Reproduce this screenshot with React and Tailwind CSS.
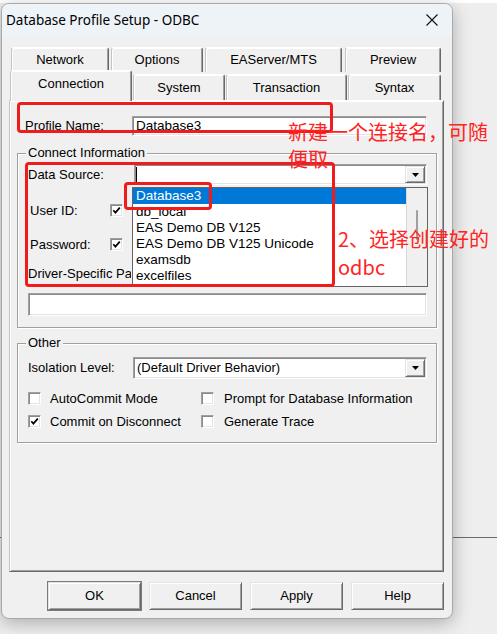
import React from 'react';

// classic 3D edges
const raised =
  'border border-t-[#e3e3e3] border-l-[#e3e3e3] border-r-[#696969] border-b-[#696969] shadow-[inset_1px_1px_0_#fff,inset_-1px_-1px_0_#a0a0a0]';
const sunken =
  'border border-t-[#a0a0a0] border-l-[#a0a0a0] border-r-white border-b-white shadow-[inset_1px_1px_0_#8a8a8a,inset_-1px_-1px_0_#e3e3e3]';
const etched = 'border border-[#a0a0a0] shadow-[inset_1px_1px_0_#fff,1px_1px_0_#fff]';

const backTabs = [
  { label: 'Network', cls: 'ml-[2px] w-[98px]' },
  { label: 'Options', cls: 'ml-[2px] w-[92px]' },
  { label: 'EAServer/MTS', cls: 'ml-[2px] w-[137px]' },
  { label: 'Preview', cls: 'ml-[3px] w-[96px]' },
];

const frontTabs = [
  { label: 'System', cls: 'ml-[1px] w-[92px]' },
  { label: 'Transaction', cls: 'ml-[1px] w-[121px]' },
  { label: 'Syntax', cls: 'ml-[1px] w-[93px]' },
];

const sources = ['Database3', 'db_local', 'EAS Demo DB V125', 'EAS Demo DB V125 Unicode', 'examsdb', 'excelfiles'];

const tabBase =
  'flex items-center justify-center rounded-t-[3px] bg-[#f0f0f0] border-t border-l border-r border-t-white border-l-[#c4c4c4] border-r-[#696969] shadow-[inset_1px_1px_0_#fff,inset_-1px_0_0_#a0a0a0]';

function DropArrow() {
  return (
    <div className={`absolute right-[1px] top-[1px] bottom-[1px] flex w-[20px] items-center justify-center bg-[#f0f0f0] ${raised}`}>
      <svg width="7" height="4" viewBox="0 0 7 4">
        <path d="M0 0h7L3.5 4z" fill="#000" />
      </svg>
    </div>
  );
}

function Check({ checked }) {
  return (
    <span className={`flex h-[13px] w-[13px] shrink-0 items-center justify-center bg-white ${sunken}`}>
      {checked && (
        <svg width="9" height="9" viewBox="0 0 9 9">
          <path d="M1.3 4.2 L3.4 6.6 L7.8 1.6" stroke="#000" strokeWidth="1.7" fill="none" />
        </svg>
      )}
    </span>
  );
}

function Button({ children, primary }) {
  return (
    <button
      className={`h-[28px] w-[93px] bg-[#f0f0f0] text-[13px] ${raised} ${primary ? 'outline outline-1 outline-[#7a7a7a]' : ''}`}
    >
      {children}
    </button>
  );
}

export default function App() {
  return (
    <div className="relative h-[634px] w-[497px] overflow-hidden bg-[#eeeeee] font-['Liberation_Sans',Arial,sans-serif] text-[13px] text-black">
      {/* desktop behind the window */}
      <div className="absolute left-0 top-0 h-[3px] w-full bg-white" />
      <div className="absolute left-0 top-[537px] h-px w-full bg-[#6b6b6b]" />

      <div className="absolute left-[1px] top-[3px] flex h-[616px] w-[452px] flex-col overflow-hidden rounded-[8px] border border-[#a9a9a9] bg-[#f0f0f0] shadow-[0_4px_18px_rgba(0,0,0,0.28)]">
        {/* title bar */}
        <div className="flex h-[32px] items-center justify-between bg-[#eef3f8] pl-[4px] pr-[14px]">
          <span className="font-['Noto_Sans',sans-serif] text-[13.5px]">Database Profile Setup - ODBC</span>
          <svg width="12" height="12" viewBox="0 0 12 12">
            <path d="M0.5 0.5L11.5 11.5M11.5 0.5L0.5 11.5" stroke="#111" strokeWidth="1.1" />
          </svg>
        </div>

        <div className="flex flex-col pl-[7px]">
          {/* tabs, back row */}
          <div className="mt-[11px] flex h-[25px]">
            {backTabs.map((t) => (
              <div key={t.label} className={`${tabBase} ${t.cls} h-[25px]`}>
                {t.label}
              </div>
            ))}
          </div>
          {/* tabs, front row */}
          <div className="flex h-[28px] items-end">
            <div className={`${tabBase} relative z-10 -mb-px ml-[1px] h-[31px] w-[122px] pb-[4px]`}>Connection</div>
            {frontTabs.map((t) => (
              <div key={t.label} className={`${tabBase} ${t.cls} h-[26px]`}>
                {t.label}
              </div>
            ))}
          </div>

          {/* tab page */}
          <div className="flex h-[472px] w-[435px] flex-col border border-t-white border-l-[#c4c4c4] border-r-[#696969] border-b-[#696969] bg-[#f0f0f0] shadow-[inset_1px_1px_0_#fff,inset_-1px_-1px_0_#a0a0a0]">
            <div className="mt-[15px] flex items-center">
              <span className="w-[122px] pl-[15px]">Profile Name:</span>
              <div className={`flex h-[20px] w-[295px] items-center bg-white pl-[3px] text-[13.5px] ${sunken}`}>Database3</div>
            </div>

            {/* Connect Information */}
            <div className={`relative ml-[7px] mt-[17px] w-[420px] pb-[11px] pl-[10px] pt-[10px] ${etched}`}>
              <span className="absolute -top-[9px] left-[8px] bg-[#f0f0f0] px-[2px] leading-[16px]">Connect Information</span>

              <div className="flex items-center">
                <span className="w-[106px]">Data Source:</span>
                <div className={`relative h-[21px] w-[293px] bg-white ${sunken}`}>
                  <div className="absolute left-[1px] top-[2px] h-[15px] w-px bg-black" />
                  <DropArrow />
                  <div className="absolute -left-[3px] top-[22px] z-20 flex h-[100px] w-[296px] overflow-hidden border border-[#646464] bg-white">
                    <div className="flex w-[273px] flex-col">
                      {sources.map((s, i) => (
                        <div
                          key={s}
                          className={`h-[16px] shrink-0 pl-[3px] text-[13.5px] leading-[16px] ${i === 0 ? 'bg-[#0078d7] text-white' : ''}`}
                        >
                          {s}
                        </div>
                      ))}
                    </div>
                    <div className="relative flex-1 border-l border-[#d9d9d9] bg-[#f0f0f0]">
                      <div className="ml-[9px] mt-[22px] h-[30px] w-[2px] rounded-full bg-[#a0a0a0]" />
                    </div>
                  </div>
                </div>
              </div>

              <div className="mt-[19px] flex h-[13px] items-center pl-[2px]">
                <span className="w-[80px]">User ID:</span>
                <Check checked />
              </div>
              <div className="mt-[21px] flex h-[13px] items-center pl-[2px]">
                <span className="w-[80px]">Password:</span>
                <Check checked />
              </div>
              {/* the open list hides the tail of this label */}
              <div className="mt-[15px] h-[15px] w-[103px] overflow-hidden whitespace-nowrap leading-[15px]">
                Driver-Specific Parameters:
              </div>
              <div className={`mt-[12px] h-[23px] w-[399px] bg-white ${sunken}`} />
            </div>

            {/* Other */}
            <div className={`relative ml-[7px] mt-[15px] w-[420px] pb-[14px] pl-[10px] pt-[13px] ${etched}`}>
              <span className="absolute -top-[9px] left-[8px] bg-[#f0f0f0] px-[2px] leading-[16px]">Other</span>

              <div className="flex items-center">
                <span className="w-[105px]">Isolation Level:</span>
                <div className={`relative flex h-[22px] w-[294px] items-center bg-white pl-[3px] ${sunken}`}>
                  (Default Driver Behavior)
                  <DropArrow />
                </div>
              </div>

              <div className="mt-[13px] flex h-[13px] items-center">
                <div className="flex w-[173px] items-center gap-[9px]">
                  <Check />
                  <span>AutoCommit Mode</span>
                </div>
                <div className="flex items-center gap-[10px]">
                  <Check />
                  <span>Prompt for Database Information</span>
                </div>
              </div>
              <div className="mt-[10px] flex h-[13px] items-center">
                <div className="flex w-[173px] items-center gap-[9px]">
                  <Check checked />
                  <span>Commit on Disconnect</span>
                </div>
                <div className="flex items-center gap-[10px]">
                  <Check />
                  <span>Generate Trace</span>
                </div>
              </div>
            </div>
          </div>

          {/* dialog buttons */}
          <div className="mt-[10px] flex w-[435px] justify-end gap-[8px]">
            <Button primary>OK</Button>
            <Button>Cancel</Button>
            <Button>Apply</Button>
            <Button>Help</Button>
          </div>
        </div>
      </div>

      {/* red notes on top */}
      <div className="absolute left-[17px] top-[102px] z-30 h-[31px] w-[316px] rounded-[4px] border-[3px] border-[#f01c1c]" />
      <div className="absolute left-[25px] top-[162px] z-30 h-[125px] w-[310px] rounded-[4px] border-[3px] border-[#f01c1c]" />
      <div className="absolute left-[124px] top-[182px] z-30 h-[28px] w-[88px] rounded-[4px] border-[3px] border-[#f01c1c]" />
      <div className="absolute left-[288px] top-[118px] z-30 font-['Noto_Sans_CJK_SC',sans-serif] text-[20px] leading-[27px] text-[#ff2424]">
        新建一个连接名，可随
        <br />
        便取
      </div>
      <div className="absolute left-[338px] top-[225px] z-30 font-['Noto_Sans_CJK_SC',sans-serif] text-[20px] leading-[28px] text-[#ff2424]">
        2、选择创建好的
        <br />
        odbc
      </div>
    </div>
  );
}
